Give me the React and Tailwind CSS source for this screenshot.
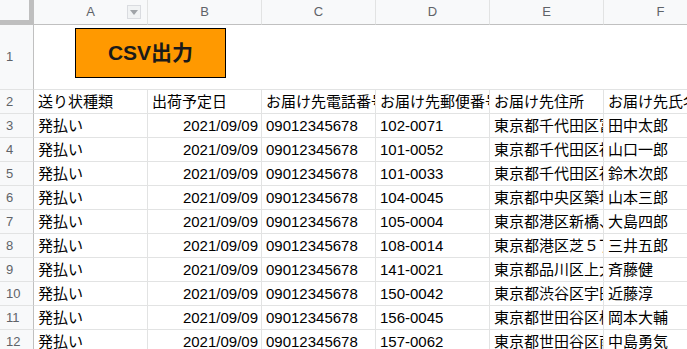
const COLS = ["A", "B", "C", "D", "E", "F"];

const HEAD = ["送り状種類", "出荷予定日", "お届け先電話番号", "お届け先郵便番号", "お届け先住所", "お届け先氏名"];

const ROWS = [
  ["102-0071", "東京都千代田区富士見", "田中太郎"],
  ["101-0052", "東京都千代田区神田小川町", "山口一郎"],
  ["101-0033", "東京都千代田区神田岩本町", "鈴木次郎"],
  ["104-0045", "東京都中央区築地", "山本三郎"],
  ["105-0004", "東京都港区新橋、４丁目", "大島四郎"],
  ["108-0014", "東京都港区芝５丁目", "三井五郎"],
  ["141-0021", "東京都品川区上大崎", "斉藤健"],
  ["150-0042", "東京都渋谷区宇田川町", "近藤淳"],
  ["156-0045", "東京都世田谷区桜上水", "岡本大輔"],
  ["157-0062", "東京都世田谷区南烏山", "中島勇気"],
];

const font = "font-['Liberation_Sans','Noto_Sans_CJK_JP',sans-serif]";

function RowHead({ n, h }) {
  return (
    <div
      className={`${h} bg-[#f8f9fa] border-r border-b border-r-[#c0c0c0] border-b-[#e2e3e3] flex items-center pl-[6px] text-[13px] text-[#5f6368]`}
    >
      {n}
    </div>
  );
}

function Cell({ children, right }) {
  return (
    <div
      className={`h-[24px] border-r border-b border-[#e2e3e3] overflow-hidden whitespace-nowrap text-[15px] leading-[23px] text-black ${
        right ? "text-right pr-[3px]" : "pl-[4px]"
      }`}
    >
      {children}
    </div>
  );
}

export default function App() {
  return (
    <div className={`relative w-[687px] h-[349px] overflow-hidden bg-white ${font}`}>
      <div className="grid grid-cols-[34px_114px_114px_114px_114px_114px_114px] w-[718px]">
        {/* column header */}
        <div className="h-[25px] bg-[#f8f9fa] border-r-[5px] border-b-[5px] border-[#bfbfbf]" />
        {COLS.map((c, i) => (
          <div
            key={c}
            className="h-[25px] bg-[#f8f9fa] border-r border-b border-r-[#e2e3e3] border-b-[#c0c0c0] relative flex items-center justify-center text-[13px] text-[#5f6368]"
          >
            {c}
            {i === 0 && (
              <div className="absolute right-[6px] top-[5px] w-[14px] h-[14px] border border-[#dadce0] bg-[#f1f3f4] flex items-center justify-center">
                <svg width="8" height="5" viewBox="0 0 8 5">
                  <path d="M0 0h8L4 5z" fill="#a0a4a8" />
                </svg>
              </div>
            )}
          </div>
        ))}

        {/* row 1: no inner gridlines */}
        <RowHead n={1} h="h-[65px]" />
        <div className="col-span-6 h-[65px] border-b border-[#e2e3e3]" />

        {/* row 2 */}
        <RowHead n={2} h="h-[24px]" />
        {HEAD.map((t) => (
          <Cell key={t}>{t}</Cell>
        ))}

        {ROWS.map((r, i) => (
          <div key={i} className="contents">
            <RowHead n={i + 3} h="h-[24px]" />
            <Cell>発払い</Cell>
            <Cell right>2021/09/09</Cell>
            <Cell>09012345678</Cell>
            <Cell>{r[0]}</Cell>
            <Cell>{r[1]}</Cell>
            <Cell>{r[2]}</Cell>
          </div>
        ))}
      </div>

      {/* floating drawing */}
      <button className="absolute left-[75px] top-[28px] w-[151px] h-[50px] bg-[#ff9900] border border-black flex items-center justify-center text-[21px] font-bold text-[#1a1a1a]">
        CSV出力
      </button>
    </div>
  );
}
